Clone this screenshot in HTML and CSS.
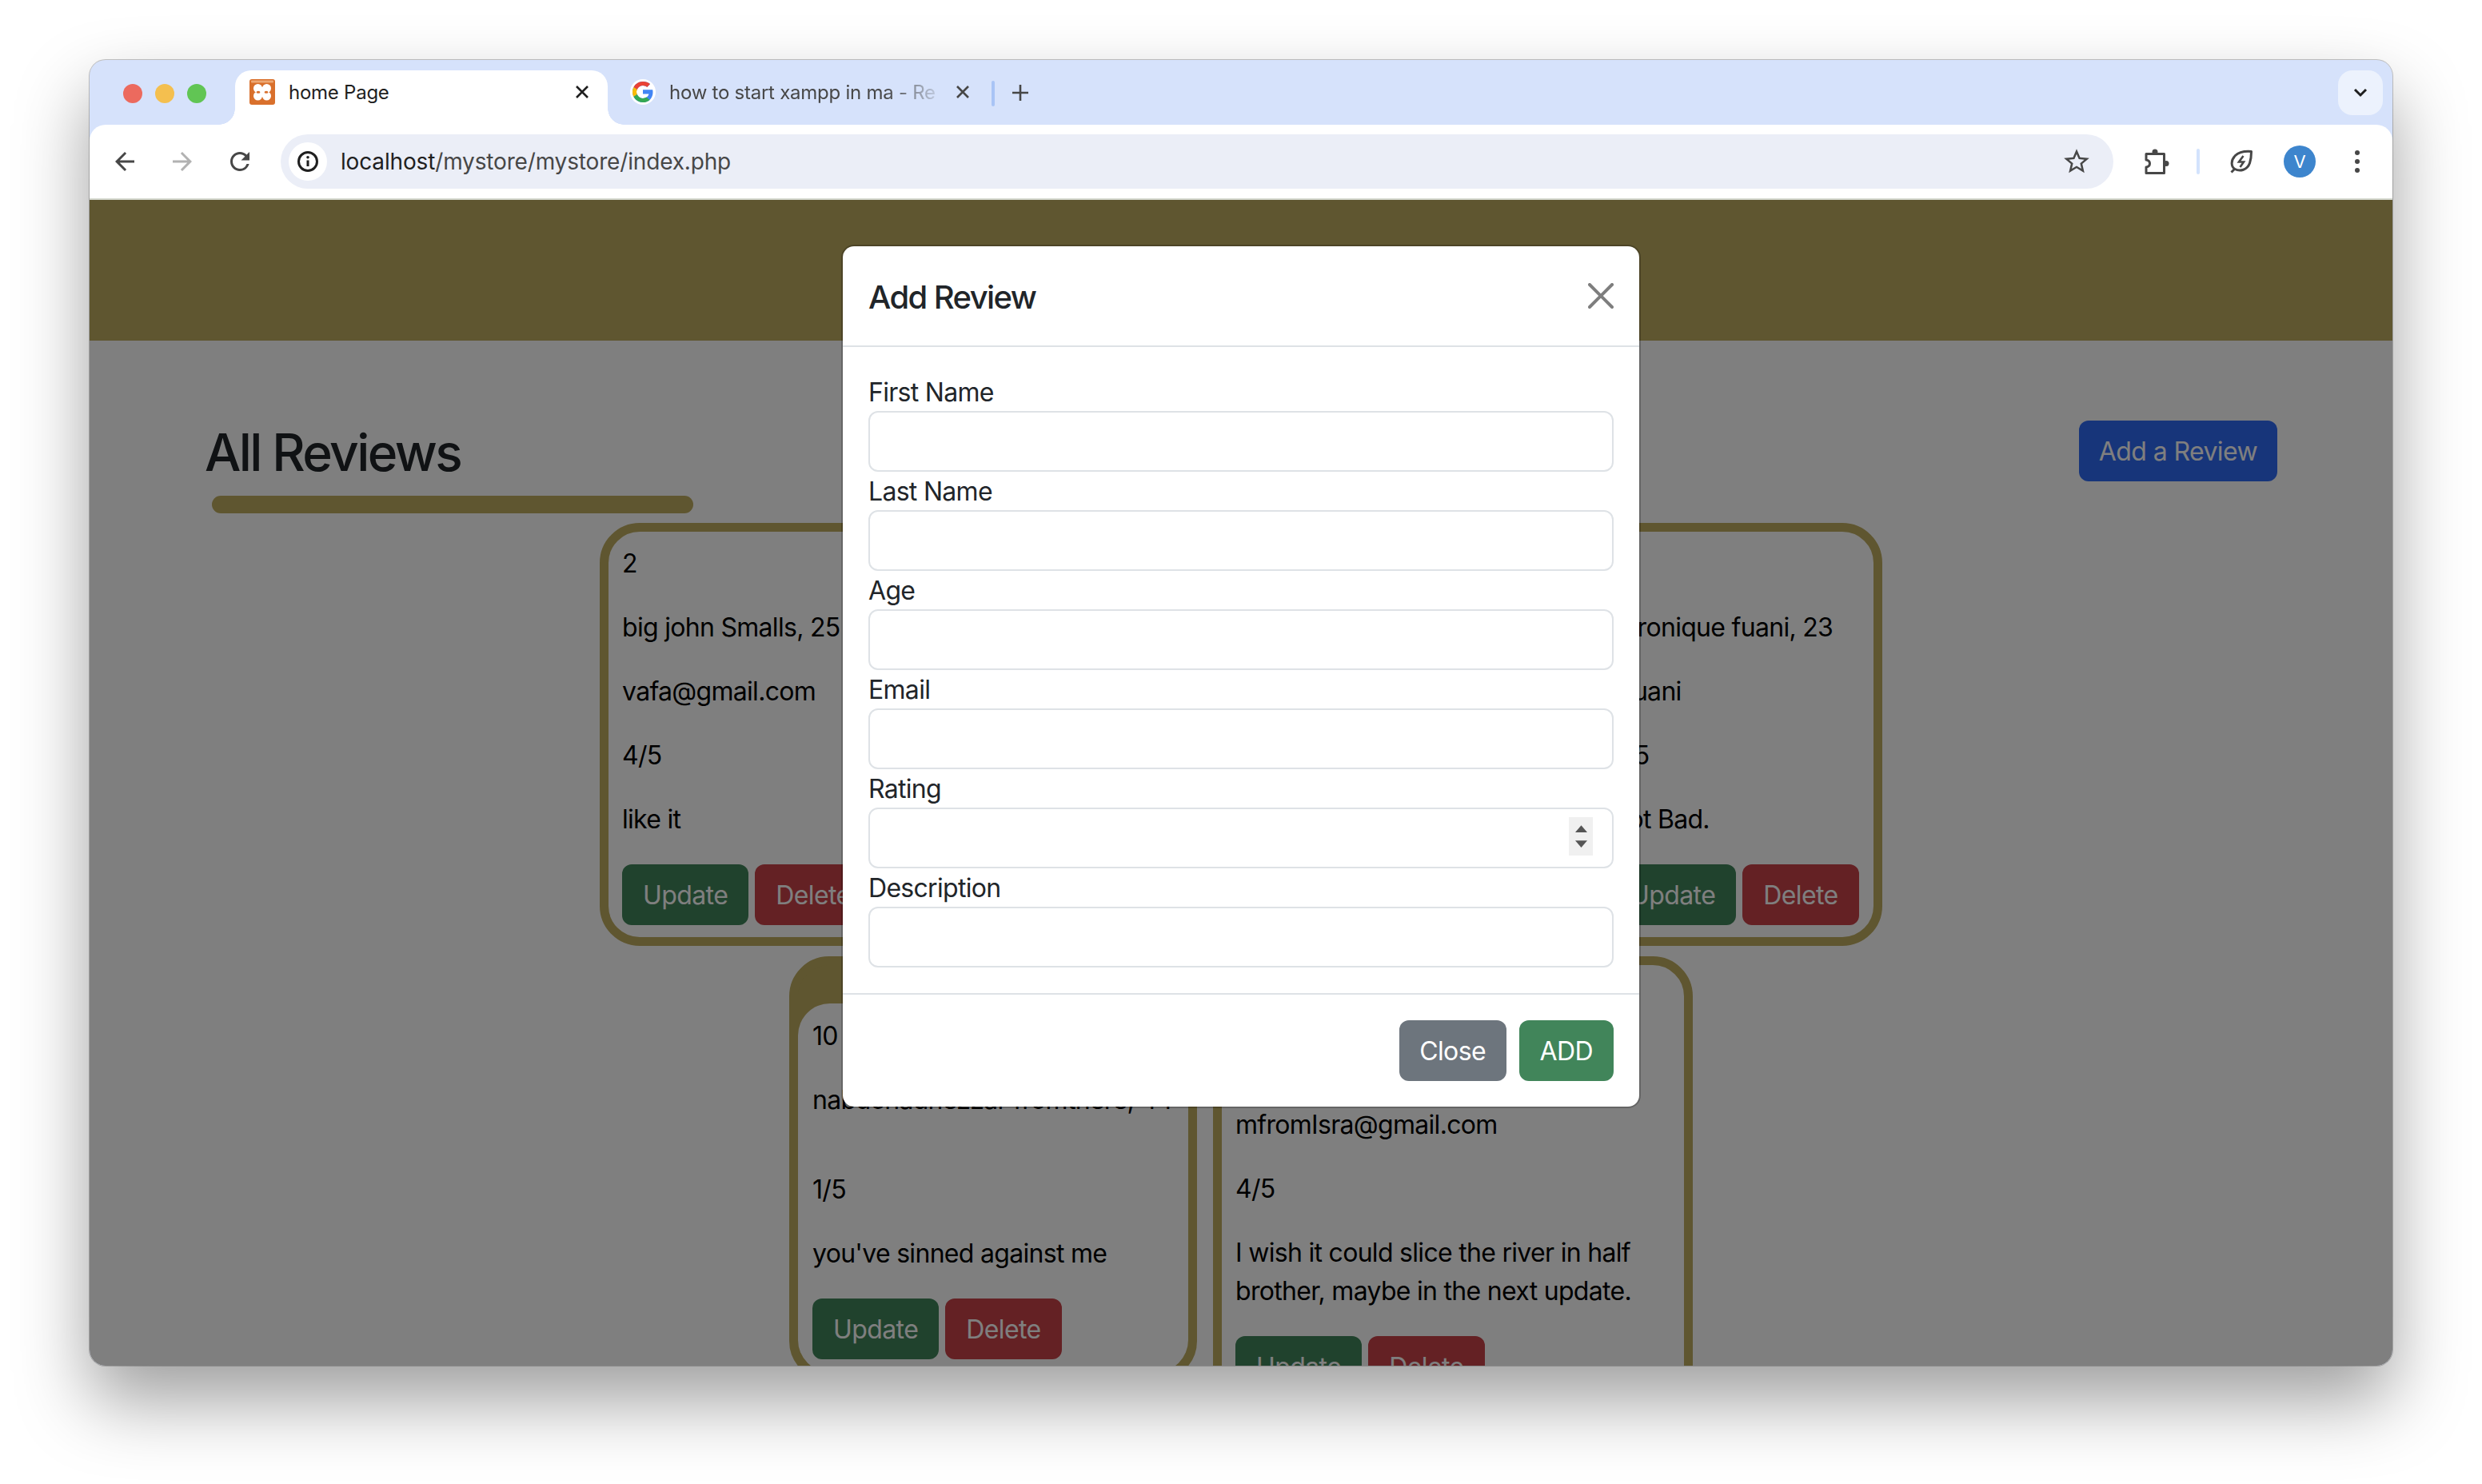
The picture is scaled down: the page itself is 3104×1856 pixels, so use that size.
FILE: index.html
```html
<!DOCTYPE html>
<html lang="en">
<head>
  <meta charset="UTF-8">
  <title>home Page</title>
  <link rel="stylesheet" href="styles.css">
</head>
<body>
  <div class="window">
    <div class="tabstrip">
      <div class="lights">
        <span class="light red"></span>
        <span class="light yellow"></span>
        <span class="light green"></span>
      </div>
      <div class="tab active">
        <svg class="favicon" viewBox="0 0 32 32">
          <rect x="0" y="0" width="32" height="32" rx="3" fill="#d9702c"/>
          <rect x="2" y="1.500" width="28" height="3" rx="1" fill="#eda874"/>
          <g fill="#fff">
            <circle cx="10.500" cy="11.500" r="5.500"/>
            <circle cx="21.500" cy="11.500" r="5.500"/>
            <circle cx="10.500" cy="21" r="5.500"/>
            <circle cx="21.500" cy="21" r="5.500"/>
            <rect x="9" y="10" width="14" height="12"/>
          </g>
          <ellipse cx="11" cy="16.200" rx="2.400" ry="1.500" fill="#d9702c"/>
          <ellipse cx="21" cy="16.200" rx="2.400" ry="1.500" fill="#d9702c"/>
        </svg>
        <span class="tab-title">home Page</span>
        <svg class="tab-close" viewBox="0 0 20 20"><path d="M3 3l14 14M17 3L3 17" stroke="#1f1f1f" stroke-width="2.600" fill="none"/></svg>
      </div>
      <div class="tab other">
        <svg class="favicon" viewBox="0 0 32 32">
          <circle cx="16" cy="16" r="16" fill="#fff"/>
          <path d="M16 13.300v5.300h7.400c-.7 3.300-3.700 5.400-7.400 5.400-4.400 0-8-3.600-8-8s3.600-8 8-8c2 0 3.800.7 5.200 1.900l3.800-3.800C22.700 4 19.500 3 16 3 8.800 3 3 8.800 3 16s5.800 13 13 13c7.500 0 12.500-5.300 12.500-12.700 0-1-.1-2-.3-3z" fill="#4285f4"/>
          <path d="M4.500 9.900l4.400 3.200C10 10 12.800 8 16 8c2 0 3.800.7 5.200 1.900l3.800-3.800C22.700 4 19.500 3 16 3 11 3 6.700 5.800 4.500 9.900z" fill="#ea4335"/>
          <path d="M3 16c0 2.200.5 4.200 1.500 6.100L8.900 19c-.6-.9-.9-1.900-.9-3s.3-2 .9-2.900L4.500 9.900C3.500 11.800 3 13.800 3 16z" fill="#fbbc05"/>
          <path d="M16 29c3.400 0 6.400-1.100 8.600-3.100l-4.200-3.300c-1.200.9-2.700 1.400-4.400 1.400-3.200 0-6-2.100-7.100-5L4.500 22.100C6.700 26.200 11 29 16 29z" fill="#34a853"/>
        </svg>
        <span class="tab-title fade">how to start xampp in ma - Re</span>
        <svg class="tab-close" viewBox="0 0 20 20"><path d="M3 3l14 14M17 3L3 17" stroke="#474747" stroke-width="2.600" fill="none"/></svg>
      </div>
      <span class="tab-sep"></span>
      <svg class="new-tab" viewBox="0 0 20 20"><path d="M10 0v20M0 10h20" stroke="#474747" stroke-width="2.600" fill="none"/></svg>
      <div class="tab-list">
        <svg viewBox="0 0 18 12" class="chevron"><path d="M2 2l7 7 7-7" stroke="#1f1f1f" stroke-width="3" fill="none"/></svg>
      </div>
    </div>

    <div class="toolbar">
      <svg class="nav-icon" viewBox="0 0 24 24"><path fill="#474747" d="M20 11H7.830l5.590-5.590L12 4l-8 8 8 8 1.410-1.410L7.830 13H20v-2z"/></svg>
      <svg class="nav-icon" viewBox="0 0 24 24"><path fill="#b2b2b2" d="M4 11h12.170l-5.590-5.590L12 4l8 8-8 8-1.410-1.410L16.170 13H4v-2z"/></svg>
      <svg class="nav-icon" viewBox="0 0 24 24"><path fill="#474747" d="M17.650 6.350A7.958 7.958 0 0 0 12 4c-4.420 0-7.990 3.580-7.990 8s3.570 8 7.990 8c3.730 0 6.840-2.550 7.730-6h-2.080A5.990 5.990 0 0 1 12 18c-3.310 0-6-2.690-6-6s2.690-6 6-6c1.660 0 3.140.690 4.220 1.780L13 11h7V4l-2.350 2.350z"/></svg>
      <div class="omnibox">
        <span class="site-info">
          <svg viewBox="0 0 28 28" class="info-icon">
            <circle cx="14" cy="14" r="11.500" fill="none" stroke="#1f1f1f" stroke-width="3"/>
            <path d="M14 12.500v7.500" stroke="#1f1f1f" stroke-width="3"/>
            <circle cx="14" cy="8.800" r="1.800" fill="#1f1f1f"/>
          </svg>
        </span>
        <span class="url"><span class="host">localhost</span>/mystore/mystore/index.php</span>
        <svg class="star" viewBox="0 0 24 24"><path fill="#474747" d="M22 9.240l-7.190-.620L12 2 9.190 8.630 2 9.240l5.460 4.730L5.820 21 12 17.270 18.180 21l-1.630-7.030L22 9.240zM12 15.400l-3.760 2.270 1-4.280-3.320-2.880 4.380-.380L12 6.100l1.710 4.040 4.380.380-3.320 2.880 1 4.280L12 15.400z"/></svg>
      </div>
      <svg class="puzzle" viewBox="0 0 32 32">
        <path d="M3 6.500h22.500v24H3v-7.500c3.500-.5 4.500-2.500 4.500-4.500S6.500 14.500 3 14z" fill="none" stroke="#474747" stroke-width="3" stroke-linejoin="round"/>
        <circle cx="14" cy="4" r="3.500" fill="#474747"/>
        <circle cx="28" cy="18.500" r="3.500" fill="#474747"/>
      </svg>
      <span class="tool-sep"></span>
      <svg class="leaf" viewBox="0 0 30 30">
        <path d="M27.500 2.500C20 2 12.500 2.500 7.500 7.500 1 14 2.500 22 7 24.500c6.500 3.500 15.500 1 18.500-7.500 1.500-4.500 2-10 2-14.500z" fill="none" stroke="#474747" stroke-width="3" stroke-linejoin="round"/>
        <path d="M7 24l-4.500 4.500" stroke="#474747" stroke-width="3"/>
        <path d="M17.500 8l-5.500 7.500h6L13.500 22" fill="none" stroke="#474747" stroke-width="2.600"/>
      </svg>
      <span class="avatar">V</span>
      <span class="kebab"><i></i><i></i><i></i></span>
    </div>

    <div class="page">
      <header class="site-header"></header>

      <div class="title-row">
        <h2 class="title">All Reviews</h2>
        <button class="btn btn-blue">Add a Review</button>
      </div>
      <div class="title-bar"></div>

      <div class="reviews">
        <div class="review first">
          <p>2</p>
          <p>big john Smalls, 25</p>
          <p>vafa@gmail.com</p>
          <p>4/5</p>
          <p>like it</p>
          <div class="actions">
            <button class="btn btn-green">Update</button>
            <button class="btn btn-red">Delete</button>
          </div>
        </div>
        <div class="review second">
          <p>3</p>
          <p>veronique fuani, 23</p>
          <p>vfuani</p>
          <p>4/5</p>
          <p>Not Bad.</p>
          <div class="actions">
            <button class="btn btn-green">Update</button>
            <button class="btn btn-red">Delete</button>
          </div>
        </div>
        <div class="review narrow">
          <div class="review-inner">
            <p>10</p>
            <p>nabuchadnezzar fromthere, 44</p>
            <p></p>
            <p>1/5</p>
            <p>you've sinned against me</p>
            <div class="actions">
              <button class="btn btn-green">Update</button>
              <button class="btn btn-red">Delete</button>
            </div>
          </div>
        </div>
        <div class="review medium">
          <p>11</p>
          <p>m from Isra, 30</p>
          <p>mfromIsra@gmail.com</p>
          <p>4/5</p>
          <p>I wish it could slice the river in half<br>brother, maybe in the next update.</p>
          <div class="actions">
            <button class="btn btn-green">Update</button>
            <button class="btn btn-red">Delete</button>
          </div>
        </div>
      </div>

      <div class="backdrop"></div>

      <div class="modal-layer">
        <div class="modal">
          <div class="modal-header">
            <h5 class="modal-title">Add Review</h5>
            <svg class="btn-close" viewBox="0 0 16 16"><path d="M.293.293a1 1 0 0 1 1.414 0L8 6.586 14.293.293a1 1 0 1 1 1.414 1.414L9.414 8l6.293 6.293a1 1 0 0 1-1.414 1.414L8 9.414l-6.293 6.293a1 1 0 0 1-1.414-1.414L6.586 8 .293 1.707a1 1 0 0 1 0-1.414"/></svg>
          </div>
          <div class="modal-body">
            <label class="field-label">First Name</label>
            <input class="field" type="text">
            <label class="field-label">Last Name</label>
            <input class="field" type="text">
            <label class="field-label">Age</label>
            <input class="field" type="text">
            <label class="field-label">Email</label>
            <input class="field" type="text">
            <label class="field-label">Rating</label>
            <div class="number-wrap">
              <input class="field" type="text">
              <span class="spinner">
                <svg viewBox="0 0 12 7"><path d="M6 0l6 7H0z" fill="#555"/></svg>
                <svg viewBox="0 0 12 7"><path d="M6 7L0 0h12z" fill="#555"/></svg>
              </span>
            </div>
            <label class="field-label">Description</label>
            <input class="field" type="text">
          </div>
          <div class="modal-footer">
            <button class="btn btn-gray">Close</button>
            <button class="btn btn-green">ADD</button>
          </div>
        </div>
      </div>
    </div>
  </div>
</body>
</html>
```

FILE: styles.css
```css
* { box-sizing: border-box; }
html, body { margin: 0; height: 100%; }
body {
  background: #fff;
  font-family: Inter, "Noto Sans", sans-serif;
  color: #212529;
  padding: 75px 112px 0;
  overflow: hidden;
}

.window {
  width: 2880px;
  height: 1633px;
  background: #d6e2fb;
  border-radius: 20px;
  overflow: hidden;
  display: flex;
  flex-direction: column;
  box-shadow: 0 44px 90px rgba(0, 0, 0, 0.38), 0 0 0 1px rgba(0, 0, 0, 0.22);
}

/* tab strip */
.tabstrip {
  height: 81px;
  flex: none;
  display: flex;
  align-items: flex-start;
  padding-top: 13px;
  padding-left: 42px;
}
.lights { display: flex; gap: 16px; margin-top: 17px; }
.light { width: 24px; height: 24px; border-radius: 50%; }
.red { background: #ec6a5e; }
.yellow { background: #f4bf4f; }
.green { background: #61c554; }

.tab {
  height: 68px;
  display: flex;
  align-items: center;
  padding-bottom: 14px;
  font-size: 24px;
  position: relative;
}
.tab.active {
  width: 466px;
  margin-left: 36px;
  padding-left: 18px;
  padding-right: 22px;
  background: #fff;
  border-radius: 20px 20px 0 0;
  color: #1f1f1f;
}
.tab.active::before,
.tab.active::after {
  content: "";
  position: absolute;
  bottom: 0;
  width: 20px;
  height: 20px;
}
.tab.active::before { left: -20px; background: radial-gradient(circle at 0 0, transparent 19.500px, #fff 20px); }
.tab.active::after { right: -20px; background: radial-gradient(circle at 100% 0, transparent 19.500px, #fff 20px); }
.tab.other {
  width: 466px;
  padding-left: 28px;
  color: #474747;
}
.favicon { width: 32px; height: 32px; flex: none; }
.tab-title { margin-left: 17px; flex: 1; white-space: nowrap; overflow: hidden; letter-spacing: -0.25px; }
.fade {
  flex: none;
  width: 338px;
  -webkit-mask-image: linear-gradient(to right, #000 270px, rgba(0, 0, 0, 0.15) 335px);
  mask-image: linear-gradient(to right, #000 270px, rgba(0, 0, 0, 0.15) 335px);
}
.tab-close { width: 20px; height: 20px; flex: none; }
.other .tab-close { margin-left: 19px; }
.tab-sep {
  width: 4px;
  height: 32px;
  border-radius: 2px;
  background: #a9c4f5;
  margin-top: 13px;
  margin-left: 14px;
}
.new-tab { width: 20px; height: 20px; margin-top: 18px; margin-left: 22px; flex: none; }
.tab-list {
  width: 56px;
  height: 56px;
  margin-left: auto;
  margin-right: 12px;
  border-radius: 18px;
  background: #ecf2fd;
  display: flex;
  align-items: center;
  justify-content: center;
}
.chevron { width: 18px; height: 12px; }

/* toolbar */
.toolbar {
  height: 94px;
  flex: none;
  background: #fff;
  border-radius: 20px 20px 0 0;
  border-bottom: 2px solid #d5d8cf;
  display: flex;
  align-items: center;
  padding-left: 26px;
}
.nav-icon { width: 36px; height: 36px; flex: none; margin-right: 36px; }
.omnibox {
  width: 2292px;
  height: 68px;
  margin-left: -3px;
  border-radius: 34px;
  background: #ebeef7;
  display: flex;
  align-items: center;
  padding-left: 10px;
  padding-right: 27px;
}
.site-info {
  width: 48px;
  height: 48px;
  border-radius: 50%;
  background: #fff;
  display: flex;
  align-items: center;
  justify-content: center;
}
.info-icon { width: 28px; height: 28px; }
.url { margin-left: 17px; font-size: 28px; letter-spacing: -0.16px; color: #474747; flex: 1; }
.host { color: #1f1f1f; }
.star { width: 38px; height: 38px; }
.puzzle { width: 32px; height: 32px; margin-left: 38px; flex: none; }
.tool-sep { width: 4px; height: 32px; border-radius: 2px; background: #d3e3fd; margin-left: 34px; flex: none; }
.leaf { width: 30px; height: 30px; margin-left: 37px; flex: none; }
.avatar {
  width: 40px;
  height: 40px;
  margin-left: 38px;
  border-radius: 50%;
  background: #3d85cd;
  color: #fff;
  font-size: 22px;
  display: flex;
  align-items: center;
  justify-content: center;
  flex: none;
}
.kebab { display: flex; flex-direction: column; gap: 5px; margin-left: 49px; }
.kebab i { width: 6px; height: 6px; border-radius: 50%; background: #474747; }

/* page under the modal */
.page {
  flex: 1;
  position: relative;
  overflow: hidden;
  background: #fff;
  font-size: 32px;
  letter-spacing: -0.7px;
}
.site-header { height: 176px; background: #beac60; }
.title-row {
  display: flex;
  justify-content: space-between;
  align-items: center;
  margin-top: 100px;
  padding: 0 144px;
  height: 76px;
}
.title { margin: 0; padding-top: 4px; font-size: 64px; font-weight: 500; line-height: 72px; letter-spacing: -2.6px; }
.title-bar {
  width: 602px;
  height: 22px;
  margin: 18px 0 0 153px;
  border-radius: 11px;
  background: #beac60;
}

.reviews {
  width: 1604px;
  margin: 12px auto 0;
  display: flex;
  flex-wrap: wrap;
  justify-content: center;
  align-items: flex-start;
  gap: 13px 20px;
}
.review {
  display: flex;
  flex-direction: column;
  border: 11px solid #beac60;
  border-radius: 50px;
  padding: 16px 17px 15px;
  line-height: 48px;
  color: #000;
}
.review p { margin: 0 0 32px; }
.first { width: 1215px; }
.second { width: 369px; }
.medium { width: 600px; }
.narrow {
  width: 510px;
  padding: 0;
  background: #beac60;
}
.review-inner {
  display: flex;
  flex-direction: column;
  margin-top: 48px;
  padding: 17px 18px 16px;
  background: #fff;
  border-radius: 40px;
}
.actions { display: flex; gap: 8px; }

.btn {
  height: 76px;
  padding: 0 26px;
  border: 0;
  border-radius: 12px;
  font-family: inherit;
  font-size: 32px;
  letter-spacing: -0.6px;
  color: #fff;
}
.btn-blue { background: #2e6af4; padding: 0 25px; }
.btn-green { background: #41855a; }
.btn-red { background: #c84248; }
.btn-gray { background: #6d757d; padding: 0 25.500px; }

.backdrop { position: absolute; inset: 0; background: rgba(0, 0, 0, 0.5); }

/* modal */
.modal-layer {
  position: absolute;
  inset: 56px 0 auto 0;
  display: flex;
  justify-content: center;
}
.modal {
  width: 1000px;
  background: #fff;
  background-clip: padding-box;
  border: 2px solid rgba(0, 0, 0, 0.2);
  border-radius: 16px;
}
.modal-header {
  height: 126px;
  padding: 0 32px;
  border-bottom: 2px solid #dee2e6;
  display: flex;
  align-items: center;
  justify-content: space-between;
}
.modal-title { margin: 0; padding-top: 2px; font-size: 40px; font-weight: 500; letter-spacing: -1.6px; }
.btn-close { width: 32px; height: 32px; fill: #000; opacity: 0.5; }
.modal-body { padding: 32px; }
.field-label { display: block; padding-top: 2px; line-height: 46px; font-size: 32px; }
.field {
  display: block;
  width: 100%;
  height: 76px;
  border: 2px solid #dee2e6;
  border-radius: 12px;
  background: #fff;
}
.number-wrap { position: relative; }
.spinner {
  position: absolute;
  top: 12px;
  right: 26px;
  width: 30px;
  height: 48px;
  background: #f0f0f0;
  display: flex;
  flex-direction: column;
  align-items: center;
  justify-content: space-evenly;
}
.spinner svg { width: 15px; height: 9px; }
.modal-footer {
  padding: 32px;
  border-top: 2px solid #dee2e6;
  display: flex;
  justify-content: flex-end;
  gap: 16px;
}
```
